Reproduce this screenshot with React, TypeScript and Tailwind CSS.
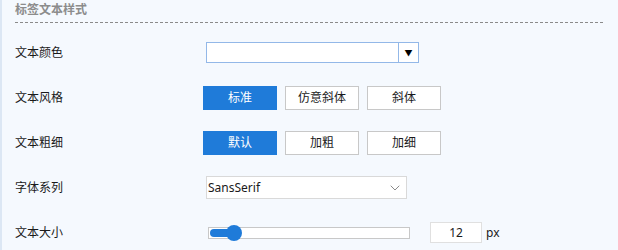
import { ChevronDown } from "lucide-react";

const font = { fontFamily: '"Noto Sans", "Noto Sans CJK SC", sans-serif' };

function Row({ label, children }: { label: string; children: React.ReactNode }) {
  return (
    <div className="flex h-[45px] items-center">
      <div className="w-[191px] shrink-0 text-[12px] text-[#1a1a1a]">{label}</div>
      {children}
    </div>
  );
}

function OptButton({ text, active }: { text: string; active?: boolean }) {
  return (
    <button
      className={
        active
          ? "h-[24px] w-[74px] bg-[#1f7bd9] text-[12px] text-white"
          : "h-[24px] w-[74px] border border-[#c8c8c8] bg-white text-[12px] text-[#1a1a1a]"
      }
    >
      {text}
    </button>
  );
}

export default function App() {
  return (
    <div
      className="h-[250px] w-[618px] overflow-hidden border-l-2 border-[#dce7f4] bg-[#f5f9fe] pl-[13px] pr-[15px]"
      style={font}
    >
      <div className="flex h-[23px] items-start border-b border-dashed border-[#8a8a8a] pt-[1px]">
        <span className="text-[12px] font-bold text-[#8c8c8c]">标签文本样式</span>
      </div>
      <div className="mt-[7px]">
        <Row label="文本颜色">
          <div className="flex h-[21px] w-[213px] border border-[#93b8e8] bg-white">
            <div className="flex-1" />
            <div className="flex w-[20px] items-center justify-center border-l border-[#93b8e8] pt-[1px] text-[8px] leading-none text-black">
              ▼
            </div>
          </div>
        </Row>
        <Row label="文本风格">
          <div className="-ml-[3px] flex gap-[8px]">
            <OptButton text="标准" active />
            <OptButton text="仿意斜体" />
            <OptButton text="斜体" />
          </div>
        </Row>
        <Row label="文本粗细">
          <div className="-ml-[3px] flex gap-[8px]">
            <OptButton text="默认" active />
            <OptButton text="加粗" />
            <OptButton text="加细" />
          </div>
        </Row>
        <Row label="字体系列">
          <div className="flex h-[23px] w-[201px] items-center justify-between border border-[#d9d9d9] bg-white pl-[1px] pr-[3px] text-[12px] text-[#1a1a1a]">
            <span>SansSerif</span>
            <ChevronDown className="h-[16px] w-[16px] text-[#8a8a8a]" strokeWidth={1.5} />
          </div>
        </Row>
        <Row label="文本大小">
          <div className="ml-[2px] flex items-center">
            <div className="relative h-[12px] w-[202px] border border-[#c8c8c8] bg-white">
              <div className="absolute left-[1px] top-[1px] h-[8px] w-[22px] rounded-l-full bg-[#1f7bd9]" />
              <div className="absolute left-[17px] top-[-3px] h-[16px] w-[16px] rounded-full bg-[#1f7bd9]" />
            </div>
            <div className="ml-[20px] flex h-[21px] w-[52px] items-center justify-center border border-[#e0e0e0] bg-white text-[12px] text-[#1a1a1a]">
              12
            </div>
            <span className="ml-[4px] text-[12px] text-[#1a1a1a]">px</span>
          </div>
        </Row>
      </div>
    </div>
  );
}
